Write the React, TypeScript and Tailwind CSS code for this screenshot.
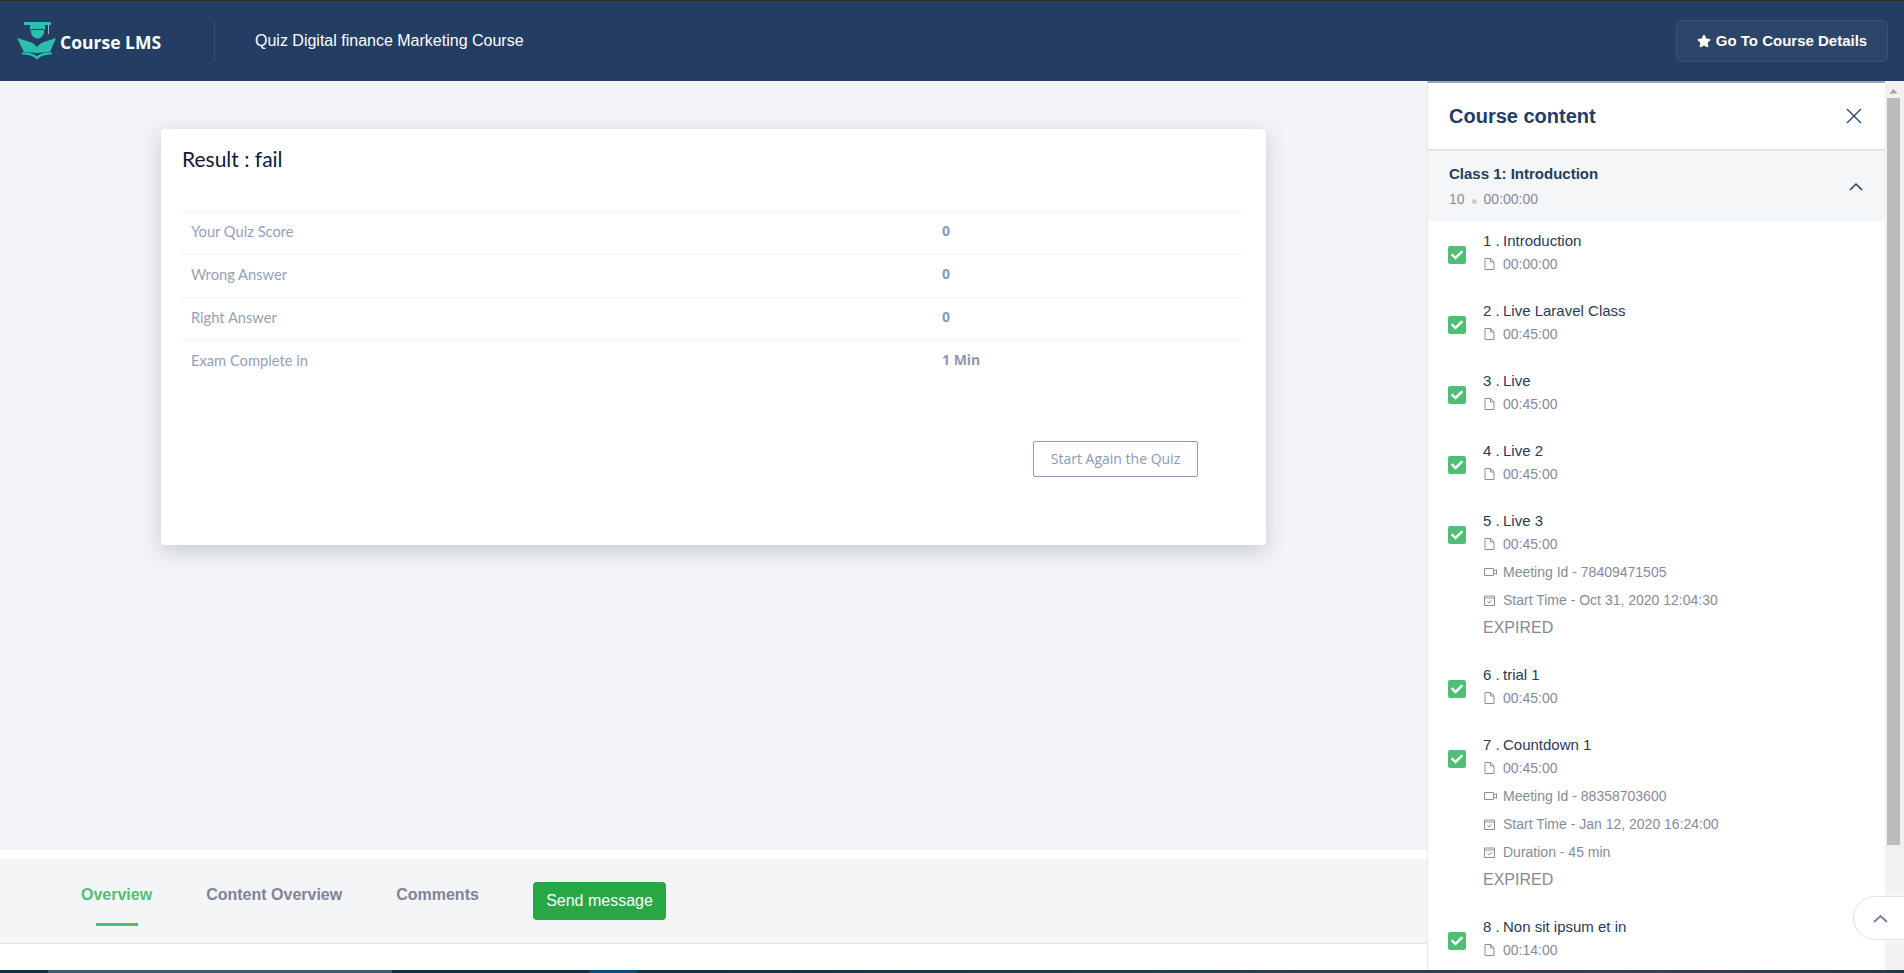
import React from "react";
import { FaCheck, FaStar } from "react-icons/fa";

type Lesson = {
	no: number;
	title: string;
	time: string;
	meeting?: string;
	start?: string;
	duration?: string;
	expired?: boolean;
};

const LESSONS: Lesson[] = [
	{ no: 1, title: "Introduction", time: "00:00:00" },
	{ no: 2, title: "Live Laravel Class", time: "00:45:00" },
	{ no: 3, title: "Live", time: "00:45:00" },
	{ no: 4, title: "Live 2", time: "00:45:00" },
	{
		no: 5,
		title: "Live 3",
		time: "00:45:00",
		meeting: "78409471505",
		start: "Oct 31, 2020 12:04:30",
		expired: true,
	},
	{ no: 6, title: "trial 1", time: "00:45:00" },
	{
		no: 7,
		title: "Countdown 1",
		time: "00:45:00",
		meeting: "88358703600",
		start: "Jan 12, 2020 16:24:00",
		duration: "45 min",
		expired: true,
	},
	{ no: 8, title: "Non sit ipsum et in", time: "00:14:00" },
];

const RESULTS = [
	{ label: "Your Quiz Score", value: "0" },
	{ label: "Wrong Answer", value: "0" },
	{ label: "Right Answer", value: "0" },
	{ label: "Exam Complete in", value: "1 Min" },
];

const Logo = () => (
	<svg width="40" height="38" viewBox="0 0 40 38">
		<path d="M7 0h27v3H7z" fill="#2bbfb0" />
		<path d="M13 3h15v5h-1v2a6.500 6.500 0 0 1-13 0V8h-1z" fill="#2bbfb0" />
		<path d="M14 7.500h13" stroke="#233d63" strokeWidth="1" />
		<path d="M31 3h1v9h-1z" fill="#9fb4c4" />
		<path d="M0 16l10 3c4 1.200 8 3 10 6 2-3 6-4.800 10-6l9-3-6 14-13 1-13-1z" fill="#2bbfb0" />
		<path d="M5 30.500c6 0 12 .5 15 4 3-3.500 9-4 15-4v2c-6 0-11 1-15 5-4-4-9-5-15-5z" fill="#2bbfb0" />
	</svg>
);

const DocIcon = () => (
	<svg width="11" height="12" viewBox="0 0 11 12" fill="none" stroke="#8b8f9d" strokeWidth="1">
		<path d="M1 .5h5.500L10 4v7.500H1z" />
		<path d="M6.500 .5V4H10" />
	</svg>
);

const VideoIcon = () => (
	<svg width="13" height="8" viewBox="0 0 13 8" fill="none" stroke="#8b8f9d" strokeWidth="1">
		<path d="M.5 .5h9v7h-9z" />
		<path d="M9.500 3l3-1.500v5l-3-1.500" />
	</svg>
);

const CalendarIcon = () => (
	<svg width="11" height="11" viewBox="0 0 11 11" fill="none" stroke="#8b8f9d" strokeWidth="1">
		<path d="M.5 1h10v9.500H.5z" />
		<path d="M.5 3h10" />
		<path d="M3.500 6.500l1.500 1.500 2.500-2.500" />
	</svg>
);

const SubRow = ({
	icon,
	text,
	first,
}: {
	icon: React.ReactNode;
	text: string;
	first?: boolean;
}) => (
	<div
		className={`flex h-6 items-center text-sm text-[#878b99] ${first ? "" : "mt-1"}`}>
		<span className="flex w-5 shrink-0 items-center pl-px">{icon}</span>
		<span>{text}</span>
	</div>
);

const LessonRow = ({ lesson }: { lesson: Lesson }) => (
	<div className="flex gap-[17px] pb-6 pl-5">
		<div className="mt-4 flex h-[18px] w-[18px] shrink-0 items-center justify-center rounded-[2px] bg-[#4fbf76]">
			<FaCheck className="text-[12px] text-white" />
		</div>
		<div>
			<div className="flex h-[22px] items-center text-[15px] text-[#2a3a55]">
				<span className="w-5 shrink-0">{lesson.no} .</span>
				<span>{lesson.title}</span>
			</div>
			<SubRow first icon={<DocIcon />} text={lesson.time} />
			{lesson.meeting && (
				<SubRow icon={<VideoIcon />} text={`Meeting Id - ${lesson.meeting}`} />
			)}
			{lesson.start && (
				<SubRow icon={<CalendarIcon />} text={`Start Time - ${lesson.start}`} />
			)}
			{lesson.duration && (
				<SubRow icon={<CalendarIcon />} text={`Duration - ${lesson.duration}`} />
			)}
			{lesson.expired && (
				<div className="mt-1 flex h-6 items-center text-base text-[#868a96]">
					EXPIRED
				</div>
			)}
		</div>
	</div>
);

export default function App() {
	return (
		<div className="relative flex h-[973px] flex-col overflow-hidden bg-white font-['Liberation_Sans',sans-serif]">
			<div className="h-px shrink-0 bg-[#2b2b2b]" />

			{/* Header */}
			<header className="flex h-20 shrink-0 items-center bg-[#233d63]">
				<div className="flex w-[214px] items-center pl-[17px]">
					<Logo />
					<span className="ml-[3px] mt-[3px] font-['Open_Sans',sans-serif] text-[17.5px] font-bold text-white">
						Course LMS
					</span>
				</div>
				<div className="h-10 w-px bg-[#3a5274]" />
				<h1 className="ml-10 text-base text-white">
					Quiz Digital finance Marketing Course
				</h1>
				<button
					type="button"
					className="ml-auto mr-4 flex h-[42px] w-[212px] items-center justify-center gap-[5px] rounded-md border border-[#3a5274] bg-[#2d4568] text-[15px] font-bold text-white">
					<FaStar className="text-[14px]" />
					Go To Course Details
				</button>
			</header>

			<div className="flex min-h-0 flex-1">
				{/* Main */}
				<main className="flex w-[1427px] shrink-0 flex-col">
					<div className="h-[769px] shrink-0 bg-[#f1f3f6] pl-[161px] pt-12">
						<div className="h-[416px] w-[1105px] rounded bg-white pl-5 pr-[21px] pt-4 shadow-[0_6px_20px_rgba(40,50,70,0.2)]">
							<h2 className="flex h-7 items-center pl-px font-['Lato',sans-serif] text-[21px] text-[#0d1b33]">
								Result : fail
							</h2>
							<div className="mt-[38px]">
								{RESULTS.map((r) => (
									<div
										key={r.label}
										className="grid h-[43px] grid-cols-[751px_1fr] items-center border-t border-[#f2f3f5] pb-1">
										<span className="pl-2.5 font-['Lato',sans-serif] text-[14.7px] text-[#95a0b5]">
											{r.label}
										</span>
										<span className="pl-2.5 font-['Open_Sans',sans-serif] text-sm font-bold text-[#8b99b0]">
											{r.value}
										</span>
									</div>
								))}
							</div>
							<div className="mr-[47px] mt-[58px] flex justify-end">
								<button
									type="button"
									className="h-9 w-[165px] rounded-[2px] border border-[#8d9ab2] font-['Open_Sans',sans-serif] text-sm text-[#8d9ab2]">
									Start Again the Quiz
								</button>
							</div>
						</div>
					</div>

					<div className="h-[9px] shrink-0 bg-white" />

					{/* Tabs */}
					<div className="relative flex h-[85px] shrink-0 items-start border-b border-[#e0e0e8] bg-[#f4f5f7] pl-[81px] pt-[23px]">
						<div className="relative mt-px text-base font-bold text-[#4fbf76]">
							Overview
							<div className="absolute left-[15px] top-[40px] h-[3px] w-[42px] bg-[#4fbf76]" />
						</div>
						<div className="ml-[54px] mt-px text-base font-bold text-[#7f8497]">
							Content Overview
						</div>
						<div className="ml-[54px] mt-px text-base font-bold text-[#7f8497]">
							Comments
						</div>
						<button
							type="button"
							className="absolute left-[533px] top-[23px] h-[38px] w-[133px] rounded bg-[#28a745] text-base text-white">
							Send message
						</button>
					</div>
				</main>

				{/* Sidebar */}
				<aside className="w-[458px] shrink-0 overflow-hidden border-l border-[#e8e9ee] border-t-2 border-t-[#9aa5b5] bg-white">
					<div className="flex h-[68px] items-center justify-between border-b-2 border-[#e4e5e9] pl-[21px] pr-[23px]">
						<h3 className="text-xl font-bold text-[#233d63]">Course content</h3>
						<svg width="16" height="16" viewBox="0 0 16 16" fill="none" stroke="#233d63" strokeWidth="1.3">
							<path d="M1 1l14 14M15 1L1 15" />
						</svg>
					</div>
					<div className="relative h-[70px] bg-[#f5f6f8] pl-[21px] pt-3">
						<div className="flex h-[22px] items-center text-[15px] font-bold text-[#233d63]">
							Class 1: Introduction
						</div>
						<div className="mt-[3px] flex h-[22px] items-center text-sm text-[#878b99]">
							10
							<span className="mx-[7px] mt-1 h-[5px] w-[5px] rounded-full bg-[#c9cbd3]" />
							00:00:00
						</div>
						<svg className="absolute right-[22px] top-[31px]" width="14" height="9" viewBox="0 0 14 9" fill="none" stroke="#233d63" strokeWidth="1.5">
							<path d="M1 8l6-6 6 6" />
						</svg>
					</div>
					<div className="pt-[9px]">
						{LESSONS.map((l) => (
							<LessonRow key={l.no} lesson={l} />
						))}
					</div>
				</aside>

				{/* Scrollbar */}
				<div className="flex w-[19px] shrink-0 flex-col bg-[#f1f1f1] pl-0.5 pt-2">
					<svg width="13" height="5" viewBox="0 0 13 5" className="shrink-0">
						<path d="M6.500 0l4 4.500h-8z" fill="#a3a3a3" />
					</svg>
					<div className="mt-[4px] h-[747px] w-[13px] bg-[#bcbcbc]" />
				</div>
			</div>

			{/* Desktop strip at the very bottom */}
			<div className="flex h-[3px] shrink-0">
				<div className="w-12 bg-[#0f2f47]" />
				<div className="w-[344px] bg-[#3f5d73]" />
				<div className="w-[197px] bg-[#0f2f47]" />
				<div className="w-12 bg-[#0a4a7a]" />
				<div className="flex-1 bg-[linear-gradient(90deg,#0f3248_0%,#1c3f50_40%,#3a3f55_80%,#1c3a4c_100%)]" />
			</div>

			{/* Back to top */}
			<button
				type="button"
				className="absolute left-[1853px] top-[896px] flex h-[44px] w-[60px] items-center rounded-l-full border border-[#e2e3ea] bg-white pl-[19px] shadow-[0_0_12px_rgba(255,255,255,0.9)]">
				<svg width="15" height="9" viewBox="0 0 15 9" fill="none" stroke="#7a8296" strokeWidth="2">
					<path d="M1 8l6.500-6 6.500 6" />
				</svg>
			</button>
		</div>
	);
}
